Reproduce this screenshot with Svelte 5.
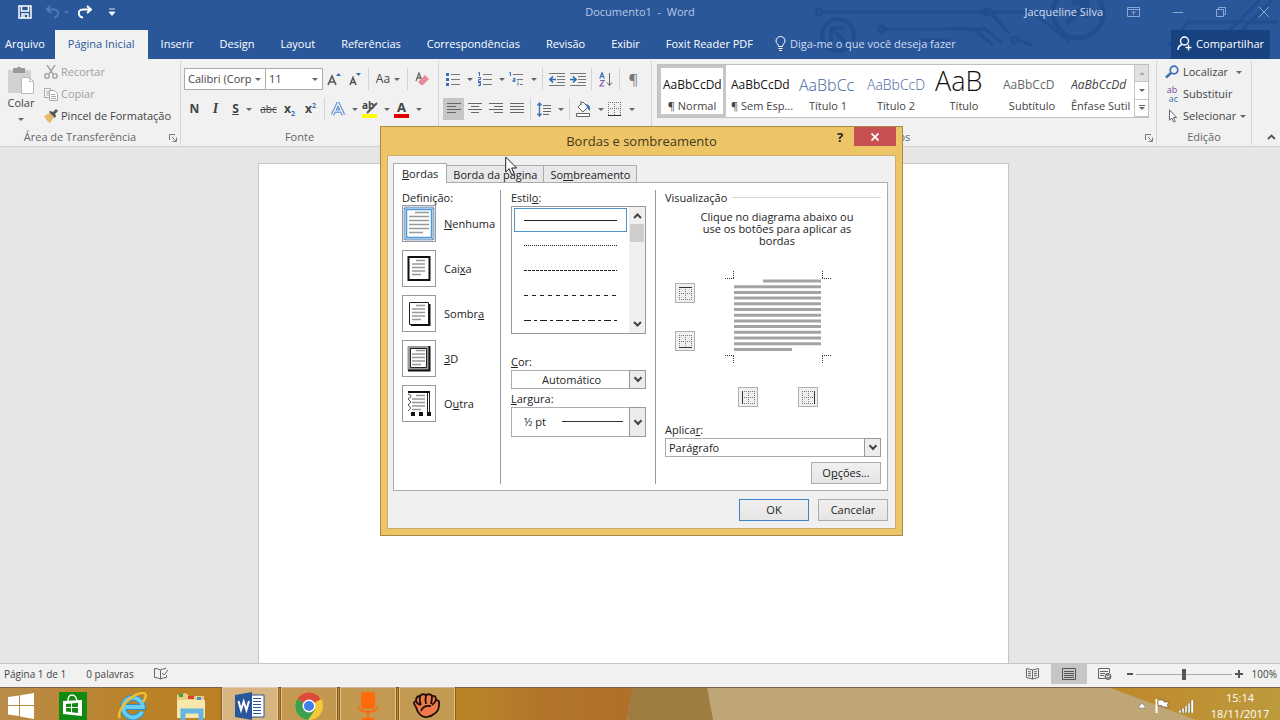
<script lang="ts">
  // Word window with the "Bordas e sombreamento" dialog open on top
  const TABS = [
    'Página Inicial',
    'Inserir',
    'Design',
    'Layout',
    'Referências',
    'Correspondências',
    'Revisão',
    'Exibir',
    'Foxit Reader PDF',
  ]
  const STYLES = [
    { name: '¶ Normal', sample: 'AaBbCcDd', kind: 'body' },
    { name: '¶ Sem Esp...', sample: 'AaBbCcDd', kind: 'body' },
    { name: 'Título 1', sample: 'AaBbCc', kind: 'h1' },
    { name: 'Título 2', sample: 'AaBbCcD', kind: 'h2' },
    { name: 'Título', sample: 'AaB', kind: 'title' },
    { name: 'Subtítulo', sample: 'AaBbCcD', kind: 'sub' },
    { name: 'Ênfase Sutil', sample: 'AaBbCcDd', kind: 'em' },
  ]
  const SETTINGS = [
    { id: 'none', pre: '', key: 'N', post: 'enhuma' },
    { id: 'box', pre: 'Cai', key: 'x', post: 'a' },
    { id: 'shadow', pre: 'Sombr', key: 'a', post: '' },
    { id: '3d', pre: '', key: '3', post: 'D' },
    { id: 'custom', pre: 'O', key: 'u', post: 'tra' },
  ]
  const LINES = [
    { name: 'Sólida', dash: 'none' },
    { name: 'Pontilhada', dash: '1 1' },
    { name: 'Tracejada curta', dash: '3 1' },
    { name: 'Tracejada', dash: '4 4' },
    { name: 'Traço e ponto', dash: '7 3 3 3' },
  ]

  let setting = $state('none')
  let line = $state(0)
  let style = $state(0)
</script>

{#snippet sep()}<span class="sep"></span>{/snippet}

{#snippet launcher()}
  <button class="launcher" aria-label="Mais opções">
    <svg width="8" height="8" viewBox="0 0 8 8" fill="none" stroke="#777"><path d="M.5 6V.5H6M3 3l4 4M7.5 3.500V7.500H3.500" /></svg>
  </button>
{/snippet}

{#snippet edge(side: string)}
  <svg width="15" height="15" viewBox="0 0 15 15" fill="none" stroke="#777" stroke-dasharray="1 1">
    <path d="M1 1.500h13M1 7.500h13M1 13.500h13M1.500 1v13M7.500 1v13M13.500 1v13" />
    <g stroke="#333" stroke-dasharray="none">
      {#if side === 'top'}<path d="M1 1.500h13" />{/if}
      {#if side === 'bottom'}<path d="M1 13.500h13" />{/if}
      {#if side === 'left'}<path d="M1.500 1v13" />{/if}
      {#if side === 'right'}<path d="M13.500 1v13" />{/if}
    </g>
  </svg>
{/snippet}

<div class="screen">
  <header>
    <svg class="circuit" width="470" height="59" viewBox="0 0 470 59" fill="none" stroke="#20498a" stroke-width="3" aria-hidden="true">
      <circle cx="9" cy="12" r="3" /><path d="M12 12h168l20 22" />
      <circle cx="72" cy="29" r="3" /><path d="M75 29h88l20 16" />
      <circle cx="28" cy="35" r="16" stroke-width="4" /><path d="M36 43L23 30M21 41V28h13" stroke-width="4" />
      <path d="M110 40h30M178 12h45l36 29" /><circle cx="177" cy="12" r="3" />
      <path d="M140 29h35l17 14" /><circle cx="205" cy="40" r="3" /><path d="M208 40l14 5" />
      <circle cx="268" cy="13" r="25" stroke-width="5" /><path d="M256 24l20-20M262 3h15v15" stroke-width="5" />
      <path d="M358 46l20-24h90M420 30l30-30M432 30l30-30" />
    </svg>
    <div class="titlebar">
      <div class="quick">
        <button aria-label="Salvar"><svg width="14" height="14" viewBox="0 0 14 14" fill="none" stroke="#fff" stroke-width="1.500"><path d="M1 1h12v12H1zM3.500 1v5h7V1M4 13V9h6v4" /><path d="M6 10v3" /></svg></button>
        <button aria-label="Desfazer"><svg width="24" height="14" viewBox="0 0 24 14" fill="none" stroke="#5078b4" stroke-width="2"><path d="M5 1L2 4.500 6 8M2 4.500h7q5 0 4 5-1 3-4 3" /><path d="M19 6h5l-2.500 3z" fill="#5078b4" stroke="none" /></svg></button>
        <button aria-label="Refazer"><svg width="14" height="14" viewBox="0 0 14 14" fill="none" stroke="#fff" stroke-width="2"><path d="M9 1l4 3.500L9 8M13 4.500H5q-5 0-4 5 1 3 4 3" /></svg></button>
        <button aria-label="Personalizar"><svg width="6" height="8" viewBox="0 0 6 8"><path d="M0 1h6M0 4h6L3 7.500z" stroke="#fff" fill="#fff" stroke-width=".8" /></svg></button>
      </div>
      <span class="doc-title">Documento1&nbsp; -&nbsp; Word</span>
      <div class="win">
        <span class="user">Jacqueline Silva</span>
        <button aria-label="Opções da faixa"><svg width="13" height="11" viewBox="0 0 13 11" fill="none" stroke="#8ba6cf"><path d="M.5.5h12v9H.5zM1 2.500h11M6.500 8V4.500M4.500 6l2-2 2 2" /></svg></button>
        <button aria-label="Minimizar"><svg width="10" height="10" viewBox="0 0 10 10" stroke="#8ba6cf"><path d="M0 5.500h10" /></svg></button>
        <button aria-label="Restaurar"><svg width="10" height="10" viewBox="0 0 10 10" fill="none" stroke="#8ba6cf"><path d="M.5 2.500h7v7h-7zM2.500 2V.5h7v7H8" /></svg></button>
        <button aria-label="Fechar"><svg width="10" height="10" viewBox="0 0 10 10" stroke="#8ba6cf"><path d="M0 0l10 10M10 0L0 10" /></svg></button>
      </div>
    </div>
    <nav class="tabs">
      <button class="file">Arquivo</button>
      {#each TABS as t, i}
        <button class:active={i === 0}>{t}</button>
      {/each}
      <button class="tell">
        <svg width="11" height="15" viewBox="0 0 11 15" fill="none" stroke="#fff"><path d="M3.500 10.500C3.500 8 1 7.500 1 5a4.500 4.500 0 0 1 9 0c0 2.500-2.500 3-2.500 5.500zM3.500 12.500h4M4 14.500h3" /></svg>
        Diga-me o que você deseja fazer
      </button>
      <button class="share">
        <svg width="15" height="15" viewBox="0 0 15 15" fill="none" stroke="#fff" stroke-width="1.400"><circle cx="7.500" cy="5" r="4" /><path d="M1 14q0-4 4-5.500M11.500 8.500v6M8.500 11.500h6" /></svg>
        Compartilhar
      </button>
    </nav>
  </header>

  <section class="ribbon">
    <div class="group">
      <div class="clip">
        <button class="paste">
          <svg width="28" height="29" viewBox="0 0 28 29"><path d="M1 4h23v23H1z" fill="#d2d2d2" /><path d="M6 2h4q2-3 4 0h4v5H6z" fill="#999" /><path d="M14.500 11.500h8l4 4v12h-12z" fill="#fff" stroke="#bbb" /><path d="M22.500 11.500v4h4" fill="none" stroke="#bbb" /></svg>
          <span>Colar</span>
          <i class="tri"></i>
        </button>
        <div class="stack">
          <button class="off"><svg width="14" height="14" viewBox="0 0 14 14" fill="none" stroke="#a5a5a5" stroke-width="1.500"><path d="M3 0l6 9M11 0L5 9" /><circle cx="3" cy="11" r="2.200" /><circle cx="11" cy="11" r="2.200" /></svg>Recortar</button>
          <button class="off"><svg width="14" height="14" viewBox="0 0 14 14" fill="#fff" stroke="#a9a9a9"><path d="M.5 1.500h6v9h-6zM2 4h3M2 6h3M2 8h3" /><path d="M5.500 3.500h5l3 3v7h-8zM7 7.500h4M7 9.500h5M7 11.500h5" /></svg>Copiar</button>
          <button><svg width="14" height="14" viewBox="0 0 14 14"><path d="M0 7l6-3 4 4-4 6-2-1z" fill="#e8b968" /><path d="M5 3l6 6 1-2-1-2 3-3-2-2-3 3-3-1z" fill="#555" /></svg>Pincel de Formatação</button>
        </div>
      </div>
      <div class="caption">Área de Transferência{@render launcher()}</div>
    </div>

    <div class="group">
      <div class="tools">
        <div class="row">
          <span class="combo font"><select aria-label="Fonte"><option>Calibri (Corp</option></select><i class="tri"></i></span>
          <span class="combo size"><select aria-label="Tamanho da fonte"><option>11</option></select><i class="tri"></i></span>
          <button class="ib" aria-label="Aumentar fonte"><svg width="14" height="14" viewBox="0 0 14 14" fill="none" stroke="#555" stroke-width="1.600"><path d="M1 13L5 4l4 9M2.500 10h5" /><path d="M9 4l2.500-3L14 4z" fill="#3b6fb5" stroke="none" /></svg></button>
          <button class="ib" aria-label="Reduzir fonte"><svg width="14" height="14" viewBox="0 0 14 14" fill="none" stroke="#555" stroke-width="1.500"><path d="M2 13l3-7.500L8 13M3 10.500h4" /><path d="M8 1h5l-2.500 3z" fill="#3b6fb5" stroke="none" /></svg></button>
          {@render sep()}
          <button class="ib drop case">Aa<i class="tri"></i></button>
          {@render sep()}
          <button class="ib" aria-label="Limpar formatação"><svg width="14" height="14" viewBox="0 0 14 14"><path d="M1 9l3-8 3 8M2 6h4" fill="none" stroke="#666" stroke-width="1.300" /><path d="M3 10l7-7 4 4-6 6H6z" fill="#e8899b" /></svg></button>
        </div>
        <div class="row">
          <button class="ib"><b>N</b></button>
          <button class="ib"><em>I</em></button>
          <button class="ib drop"><b><u>S</u></b><i class="tri"></i></button>
          <button class="ib small"><s>abc</s></button>
          <button class="ib"><b>x<sub>2</sub></b></button>
          <button class="ib"><b>x<sup>2</sup></b></button>
          {@render sep()}
          <button class="ib drop" aria-label="Efeitos de texto"><svg width="14" height="14" viewBox="0 0 14 14" fill="none"><path d="M1.500 13L7 1.500 12.500 13M4 9h6" stroke="#5b8fd0" stroke-width="3.500" /><path d="M1.500 13L7 1.500 12.500 13M4 9h6" stroke="#fff" stroke-width="1.200" /></svg><i class="tri"></i></button>
          <button class="ib drop" aria-label="Cor do realce"><span class="ink hl">ab<svg width="16" height="12" viewBox="0 0 16 12"><path d="M15 1L8 8 5 11" stroke="#555" stroke-width="2" /></svg></span><i class="tri"></i></button>
          <button class="ib drop"><span class="ink fc">A</span><i class="tri"></i></button>
        </div>
      </div>
      <div class="caption">Fonte</div>
    </div>

    <div class="group">
      <div class="tools para">
        <div class="row">
          <button class="ib drop" aria-label="Marcadores"><svg width="14" height="14" viewBox="0 0 14 14" stroke="#777"><path d="M5 2.500h9M5 7.500h9M5 12.500h9" /><path d="M0 2.500h3M0 7.500h3M0 12.500h3" stroke="#3b6fb5" stroke-width="3" /></svg><i class="tri"></i></button>
          <button class="ib drop" aria-label="Numeração"><svg width="14" height="14" viewBox="0 0 14 14" fill="none" stroke="#777"><path d="M5 2.500h9M5 7.500h9M5 12.500h9" /><path d="M0 1l1.500-.5V4M0 5.500h2.500v2H.5v2h2.500M0 10.500h2.500v3H0M1 12h1" stroke="#3b6fb5" /></svg><i class="tri"></i></button>
          <button class="ib drop" aria-label="Lista de vários níveis"><svg width="15" height="14" viewBox="0 0 15 14" fill="none" stroke="#777"><path d="M4 2.500h10M8 7.500h6M11 12.500h3" /><path d="M0 1l1.500-.5V4M4 6.500h2v3H4v-1.500h2M9 10.500v3M9 8.500v1" stroke="#3b6fb5" /></svg><i class="tri"></i></button>
          {@render sep()}
          <button class="ib" aria-label="Diminuir recuo"><svg width="16" height="13" viewBox="0 0 16 13" fill="none" stroke="#777"><path d="M0 .5h16M8 3.500h8M8 6.500h8M8 9.500h8M0 12.500h16" /><path d="M7 6.500H1M4 3.500L1 6.500l3 3" stroke="#2f6cb8" stroke-width="1.700" /></svg></button>
          <button class="ib" aria-label="Aumentar recuo"><svg width="16" height="13" viewBox="0 0 16 13" fill="none" stroke="#777"><path d="M0 .5h16M8 3.500h8M8 6.500h8M8 9.500h8M0 12.500h16" /><path d="M0 6.500h6M3 3.500l3 3-3 3" stroke="#2f6cb8" stroke-width="1.700" /></svg></button>
          {@render sep()}
          <button class="ib" aria-label="Classificar"><svg width="14" height="15" viewBox="0 0 14 15" fill="none"><path d="M.7 6.500L3 .8l2.300 5.700M1.500 4.500h3" stroke="#3b6fb5" stroke-width="1.200" /><path d="M1 8.500h4L1 14h4.500" stroke="#8b5fae" stroke-width="1.200" /><path d="M10.500 1v12M8 10.500l2.500 3 2.500-3" stroke="#666" /></svg></button>
          {@render sep()}
          <button class="ib pil">¶</button>
        </div>
        <div class="row">
          <button class="ib on" aria-label="Alinhar à esquerda"><svg width="14" height="12" viewBox="0 0 14 12" stroke="#666"><path d="M0 .5h14M0 3.500h9M0 6.500h14M0 9.500h9" /></svg></button>
          <button class="ib" aria-label="Centralizar"><svg width="14" height="12" viewBox="0 0 14 12" stroke="#666"><path d="M0 .5h14M3 3.500h8M0 6.500h14M3 9.500h8" /></svg></button>
          <button class="ib" aria-label="Alinhar à direita"><svg width="14" height="12" viewBox="0 0 14 12" stroke="#666"><path d="M0 .5h14M5 3.500h9M0 6.500h14M5 9.500h9" /></svg></button>
          <button class="ib" aria-label="Justificar"><svg width="14" height="12" viewBox="0 0 14 12" stroke="#666"><path d="M0 .5h14M0 3.500h14M0 6.500h14M0 9.500h14" /></svg></button>
          {@render sep()}
          <button class="ib drop" aria-label="Espaçamento"><svg width="14" height="15" viewBox="0 0 14 15" fill="none" stroke="#666"><path d="M6 3.500h8M6 6.500h8M6 9.500h8M6 12.500h6" /><path d="M2.500 1v13M.5 3.500l2-2.500 2 2.500M.5 11.500l2 2.500 2-2.500" stroke="#3b6fb5" stroke-width="1.300" /></svg><i class="tri"></i></button>
          {@render sep()}
          <button class="ib drop" aria-label="Sombreamento"><svg width="16" height="16" viewBox="0 0 16 16" fill="#fff" stroke="#666"><path d="M6 0v4M3 6l5-5 5 5-5 5z" /><path d="M11 3q5 1 4 7-3-2-4-7z" fill="#3b6fb5" stroke="none" /><path d="M1.500 12.500h13v3h-13z" /></svg><i class="tri"></i></button>
          <button class="ib drop" aria-label="Bordas"><svg width="14" height="14" viewBox="0 0 14 14" fill="none" stroke="#777" stroke-dasharray="1 1"><path d="M0 .5h13M0 6.500h13M.5 0v13M6.500 0v13M12.500 0v13" /><path d="M0 13.500h13" stroke="#333" stroke-dasharray="none" /></svg><i class="tri"></i></button>
        </div>
      </div>
      <div class="caption">Parágrafo</div>
    </div>

    <div class="group">
      <div class="gallery">
        {#each STYLES as s, i}
          <button class="style" class:picked={style === i} onclick={() => (style = i)}>
            <span class="sample {s.kind}">{s.sample}</span>
            <span class="name">{s.name}</span>
          </button>
        {/each}
        <div class="gal-nav">
          <button aria-label="Linha acima" disabled><i class="tri up"></i></button>
          <button aria-label="Linha abaixo"><i class="tri"></i></button>
          <button class="more" aria-label="Mais estilos"><i class="tri"></i></button>
        </div>
      </div>
      <div class="caption">Estilos{@render launcher()}</div>
    </div>

    <div class="group">
      <div class="stack edit">
        <button><svg width="14" height="14" viewBox="0 0 14 14" fill="none" stroke="#3b6fb5"><circle cx="9" cy="5" r="3.800" stroke-width="1.700" /><path d="M6 8l-5 4.500" stroke-width="2.500" /></svg>Localizar<i class="tri far"></i></button>
        <button><span class="abac"><span>ab</span><span>ac</span></span>Substituir</button>
        <button><svg width="14" height="14" viewBox="0 0 14 14" fill="#fff" stroke="#666"><path d="M4.500.8v10.500l2.300-2.300 1.700 4 1.700-.7-1.700-3.800h3.200z" /></svg>Selecionar<i class="tri"></i></button>
      </div>
      <div class="caption plain">Edição</div>
    </div>
    <button class="collapse" aria-label="Recolher"><svg width="9" height="6" viewBox="0 0 9 6" fill="none" stroke="#555" stroke-width="1.800"><path d="M1 5l3.500-3.500L8 5" /></svg></button>
  </section>

  <main><div class="page"></div></main>

  <footer class="status">
    <span>Página 1 de 1</span>
    <span>0 palavras</span>
    <svg width="14" height="12" viewBox="0 0 14 12" fill="none" stroke="#666"><path d="M6.500 2Q4 .5.500.500v9q3.500 0 6 1.500zM6.500 2Q8 .8 12 .5M6.500 11q2-1.300 6-1.500V7M8 5l2 2 4-5" /></svg>
    <div class="views">
      <button aria-label="Modo de leitura"><svg width="13" height="12" viewBox="0 0 13 12" fill="none" stroke="#666"><path d="M6.500 2L.5.500v9l6 1.500 6-1.500v-9zM6.500 2v9M2 3.500l3 .5M2 5.500l3 .5M2 7.500l3 .5M11 3.500L8 4M11 5.500L8 6M11 7.500L8 8" /></svg></button>
      <button class="on" aria-label="Layout de impressão"><svg width="14" height="12" viewBox="0 0 14 12" fill="none" stroke="#555"><path d="M.5.5h13v11H.5zM2 3.500h10M2 5.500h10M2 7.500h10M2 9.500h10" /></svg></button>
      <button aria-label="Layout da web"><svg width="14" height="12" viewBox="0 0 14 12" fill="none" stroke="#666"><path d="M7 10.500H.5V.5h11V5M2 3.500h8M2 5.500h5M2 7.500h4" /><circle cx="10" cy="8.500" r="3" fill="#888" /><path d="M8 8l2 1 2-2" stroke="#eee" /></svg></button>
    </div>
    <div class="zoom">
      <button aria-label="Menos zoom"><svg width="6" height="8" viewBox="0 0 6 8" stroke="#555" stroke-width="2"><path d="M0 4h6" /></svg></button>
      <input type="range" min="0" max="100" value="50" aria-label="Zoom" />
      <button aria-label="Mais zoom"><svg width="8" height="8" viewBox="0 0 8 8" stroke="#555" stroke-width="2"><path d="M0 4h8M4 0v8" /></svg></button>
      <span>100%</span>
    </div>
  </footer>

  <div class="taskbar">
    <svg class="wall" viewBox="0 0 1280 33" preserveAspectRatio="none" aria-hidden="true">
      <defs>
        <linearGradient id="amber"><stop offset="0" stop-color="#b98c48" /><stop offset=".25" stop-color="#ba8124" /><stop offset=".75" stop-color="#b88428" /><stop offset=".85" stop-color="#b3752a" /><stop offset="1" stop-color="#b06f2a" /></linearGradient>
        <linearGradient id="gold"><stop offset="0" stop-color="#c0882a" /><stop offset="1" stop-color="#bc9a3c" /></linearGradient>
      </defs>
      <path d="M0 0h633l-6 33H0z" fill="url(#amber)" />
      <path d="M632 0h76l6 33h-87z" fill="#9f7c3f" />
      <path d="M707 0h410l95 33H713z" fill="#bea676" />
      <path d="M1108 0h172v33h-84z" fill="url(#gold)" />
      <path d="M0 .5h1280" stroke="#77664a" />
    </svg>
    <div class="apps">
      <button class="start" aria-label="Iniciar"><svg width="26" height="26" viewBox="0 0 26 26" fill="#fff"><path d="M0 4l11-1.500V12H0zM12 2.300L26 0v12H12zM0 13h11v10L0 21.500zM12 13h14v13l-14-2.500z" /></svg></button>
      <button aria-label="Loja"><svg width="28" height="28" viewBox="0 0 28 28"><path d="M0 0h28v28H0z" fill="#108a10" /><path d="M4 9l19-1v16L4 22z" fill="#fff" /><path d="M9 9q0-6 4-6t5 6" fill="none" stroke="#fff" stroke-width="1.500" /><path d="M7 12l5-.5V15H7zM13 11.400l6-.6V15h-6zM7 16h5v4l-5-.5zM13 16h6v5l-6-.7z" fill="#108a10" /></svg></button>
      <button aria-label="Internet Explorer"><svg width="30" height="28" viewBox="0 0 30 28" fill="none"><path d="M25 19.500A9.800 9.800 0 1 1 25.800 15H8" stroke="#2b8fc4" stroke-width="6" /><path d="M25 19.500A9.800 9.800 0 1 1 25.800 15H8" stroke="#69cdf0" stroke-width="4" /><path d="M3 26C-2 20 15 0 27 1q4 2-1 9" stroke="#efbd32" stroke-width="2.500" /></svg></button>
      <button aria-label="Explorador de Arquivos"><svg width="30" height="28" viewBox="0 0 30 28"><path d="M1 3l9-2 3 3h15v22H1z" fill="#e9cf82" /><path d="M3 2h4v3H3z" fill="#3c9a4c" /><path d="M12 4h6v3h-6z" fill="#d8402f" /><path d="M21 5h4v3h-4z" fill="#4a90d0" /><path d="M1 8h28v18H1z" fill="#f6e7ad" /><path d="M7 28V19h18v9" fill="none" stroke="#68b4e0" stroke-width="5" /></svg></button>
      <button class="tile active" aria-label="Word"><svg width="30" height="28" viewBox="0 0 30 28"><path d="M12 3h17v22H12z" fill="#fff" stroke="#2a579a" /><path d="M18 6.500h8M18 9.500h8M18 12.500h8M18 15.500h8M18 18.500h8M18 21.500h8" stroke="#2a579a" /><path d="M0 3l17-3v28L0 25z" fill="#2a579a" /><path d="M3.500 9l2.500 9 2.700-8.500L11.400 18 14 9" fill="none" stroke="#fff" stroke-width="2" /></svg></button>
      <button class="tile" aria-label="Chrome"><svg width="28" height="28" viewBox="0 0 28 28"><circle cx="14" cy="14" r="14" fill="#f3c936" /><path d="M14 14L2 7a14 14 0 0 1 24 0z" fill="#d94b3d" /><path d="M14 14L2 7a14 14 0 0 0 11 21l7-10z" fill="#3d9f50" /><circle cx="14" cy="14" r="6.500" fill="#fff" /><circle cx="14" cy="14" r="5" fill="#3f7de8" /></svg></button>
      <button class="tile" aria-label="Gravador"><svg width="22" height="28" viewBox="0 0 22 28" fill="none" stroke="#ff6a0a" stroke-width="2"><rect x="5" y="1" width="12" height="15" rx="2" fill="#ff6a0a" /><path d="M1 15q2 5 10 5t10-5M11 20v6M5 27h12" /></svg></button>
      <button class="tile" aria-label="Captura"><svg width="28" height="26" viewBox="0 0 28 26" fill="#f0794a" stroke="#1c120c" stroke-width="1.800"><path d="M3 14Q-1 9 3 8q0-5 4-5 2-3 6-1 4-2 6 1 4-1 4 4 4 0 3 5 0 6-5 9-6 5-12 2-4-2-6-9z" /><path d="M3 8q1 3 5 4M7 3q-1 5 1 9M13 2q-1 5 0 9M19 3q0 4-1 8M23 7q-1 3-4 5M8 18q2-6 10-5" fill="none" /></svg></button>
    </div>
    <div class="tray">
      <button aria-label="Mostrar ícones ocultos"><svg width="8" height="6" viewBox="0 0 8 6"><path d="M0 5l4-5 4 5z" fill="#fff" stroke="#666" stroke-width=".5" /></svg></button>
      <button aria-label="Central de ações"><svg width="15" height="14" viewBox="0 0 15 14"><path d="M1.500 0v14" stroke="#fff" stroke-width="2" /><path d="M3 1h5l1 2h5l-2 3 2 2H8L7 6.500H3z" fill="#fff" stroke="#554" stroke-width=".6" /></svg></button>
      <button aria-label="Rede"><svg width="15" height="13" viewBox="0 0 15 13" fill="#fff" stroke="#554" stroke-width=".4"><path d="M0 10h2v3H0zM3 8h2v5H3zM6 5.500h2V13H6zM9 3h2v10H9zM12 0h2.500v13H12z" /></svg></button>
      <div class="clock"><span>15:14</span><span>18/11/2017</span></div>
    </div>
  </div>

  <div class="dialog" role="dialog" aria-labelledby="dlg-title">
    <div class="dlg-bar">
      <h1 id="dlg-title">Bordas e sombreamento</h1>
      <div class="dlg-ctl">
        <button class="help" aria-label="Ajuda">?</button>
        <button class="close" aria-label="Fechar"><svg width="8" height="8" viewBox="0 0 8 8" stroke="#fff" stroke-width="1.800"><path d="M.5.5l7 7M7.500.5l-7 7" /></svg></button>
      </div>
    </div>
    <div class="dlg-body">
      <div class="dlg-tabs">
        <button class="active"><u>B</u>ordas</button>
        <button>Borda da pá<u>g</u>ina</button>
        <button>So<u>m</u>breamento</button>
      </div>
      <div class="panel">
        <div class="col">
          <span class="lbl">Definição:</span>
          <div class="settings">
            {#each SETTINGS as s}
              <button class:chosen={setting === s.id} onclick={() => (setting = s.id)}>
                <svg width="34" height="37" viewBox="0 0 34 37" fill="none">
                  {#if setting === s.id}
                    <rect x="2.500" y="2.500" width="29" height="32" stroke="#2a5f9e" stroke-width="2" stroke-dasharray="1 1" />
                    <rect x="4.500" y="4.500" width="25" height="28" stroke="#4c9be0" stroke-width="1.500" />
                  {/if}
                  {#if s.id === 'box'}<rect x="6.500" y="7" width="21" height="23" stroke="#111" stroke-width="2" />{/if}
                  {#if s.id === 'shadow'}<path d="M7.500 7.500h19v22h-19z" stroke="#222" /><path d="M9 30h18.500V9" stroke="#111" stroke-width="2" />{/if}
                  {#if s.id === '3d'}<path d="M7 7.500h19v21H7z" stroke="#999" stroke-width="3" /><path d="M27.500 6v24.500H6" stroke="#111" stroke-width="2" /><path d="M8.500 8.500h16v19h-16z" stroke="#222" />{/if}
                  {#if s.id === 'custom'}
                    <path d="M6 7h22" stroke="#111" stroke-width="2" /><path d="M25.500 8v19M27.500 8v19" stroke="#222" />
                    <path d="M6 9q4 1 3 3l-3 2 3 3-3 3 3 3-3 3" stroke="#555" />
                    <path d="M9 29h20" stroke="#111" stroke-width="4" stroke-dasharray="4 4" />
                  {/if}
                  {#if s.id === 'none'}
                    <path d="M13 7.500h14M7 11.500h20M7 15.500h20M7 19.500h20M7 23.500h20M7 27.500h14" stroke="#999" stroke-width="1.500" />
                  {:else}
                    <path d="M14 10.500h9M10 14h13M10 17.500h13M10 21h13M10 24.500h9" stroke="#999" stroke-width="1.500" />
                  {/if}
                </svg>
                <span>{s.pre}<u>{s.key}</u>{s.post}</span>
              </button>
            {/each}
          </div>
        </div>

        <div class="col mid">
          <span class="lbl">Estil<u>o</u>:</span>
          <div class="list">
            <div class="lines">
              {#each LINES as l, i}
                <button class:chosen={line === i} aria-label={l.name} onclick={() => (line = i)}>
                  <svg width="93" height="1" viewBox="0 0 93 1"><path d="M0 .5h93" stroke="#222" stroke-dasharray={l.dash} /></svg>
                </button>
              {/each}
            </div>
            <div class="scroll">
              <svg width="9" height="6" viewBox="0 0 9 6" fill="none" stroke="#444" stroke-width="2"><path d="M1 5l3.500-3.500L8 5" /></svg>
              <span class="thumb"></span>
              <svg width="9" height="6" viewBox="0 0 9 6" fill="none" stroke="#444" stroke-width="2"><path d="M1 1l3.500 3.500L8 1" /></svg>
            </div>
          </div>
          <label class="lbl" for="cor"><u>C</u>or:</label>
          <span class="pick">
            <select id="cor" class="center"><option>Automático</option></select>
            <i class="chev"></i>
          </span>
          <label class="lbl" for="largura"><u>L</u>argura:</label>
          <span class="pick tall">
            <select id="largura"><option>½ pt</option></select>
            <span class="rule"></span>
            <i class="chev"></i>
          </span>
        </div>

        <div class="col view">
          <div class="legend">Visualização</div>
          <p>Clique no diagrama abaixo ou use os botões para aplicar as bordas</p>
          <div class="preview">
            <div class="side">
              <button class="edge" aria-label="Borda superior">{@render edge('top')}</button>
              <button class="edge" aria-label="Borda inferior">{@render edge('bottom')}</button>
            </div>
            <svg width="106" height="92" viewBox="0 0 106 92" fill="none">
              <path d="M0 7.500h9M8.500 0v7M106 7.500h-9M97.500 0v7M0 84.500h9M8.500 85v7M106 84.500h-9M97.500 85v7" stroke="#333" stroke-dasharray="1 1" />
              <path d="M38 10h58" stroke="#a3a3a3" stroke-width="3" />
              {#each Array(11) as _, i}
                <path d="M9 {15.7 + i * 5.7}h87" stroke="#a3a3a3" stroke-width="3" />
              {/each}
              <path d="M9 78.500h58" stroke="#a3a3a3" stroke-width="3" />
            </svg>
            <div class="under">
              <button class="edge" aria-label="Borda esquerda">{@render edge('left')}</button>
              <button class="edge" aria-label="Borda direita">{@render edge('right')}</button>
            </div>
          </div>
          <label class="lbl" for="aplicar">Aplica<u>r</u>:</label>
          <span class="pick">
            <select id="aplicar"><option>Parágrafo</option></select>
            <i class="chev"></i>
          </span>
          <button class="btn opts">O<u>p</u>ções...</button>
        </div>
      </div>
      <div class="actions">
        <button class="btn default">OK</button>
        <button class="btn">Cancelar</button>
      </div>
    </div>
    <svg class="pointer" width="13" height="20" viewBox="0 0 13 20" fill="#fff" stroke="#222"><path d="M.7 1v15l3.500-3.300 2.500 6 2.500-1-2.600-5.700h5z" /></svg>
  </div>
</div>

<style>
  :global(body) {
    margin: 0;
  }
  .screen {
    position: relative;
    display: flex;
    flex-direction: column;
    height: 100vh;
    overflow: hidden;
    background: #e6e6e6;
    color: #444;
    font: 11px/16px 'Open Sans', 'Noto Sans', sans-serif;
  }
  button,
  select {
    margin: 0;
    padding: 0;
    border: 0;
    border-radius: 0;
    background: none;
    color: inherit;
    font: inherit;
    appearance: none;
  }
  svg {
    display: block;
    flex: none;
  }
  .tri {
    flex: none;
    width: 0;
    border: 3px solid transparent;
    border-top-color: #666;
    border-bottom: 0;
  }
  .tri.up {
    border-top: 0;
    border-bottom: 3px solid #aaa;
  }

  /* ---------- title bar and tabs ---------- */
  header {
    position: relative;
    height: 59px;
    background: #2a579a;
    color: #fff;
  }
  .circuit {
    position: absolute;
    top: 0;
    right: 0;
    opacity: 0.7;
  }
  .titlebar {
    position: relative;
    display: grid;
    grid-template-columns: 1fr auto 1fr;
    align-items: center;
    height: 24px;
    margin-bottom: 6px;
  }
  .quick {
    display: flex;
    align-items: center;
    gap: 17px;
    padding-left: 18px;
  }
  .quick button:nth-child(2) {
    margin-left: -4px;
  }
  .quick button:nth-child(3) {
    margin-left: -8px;
  }
  .doc-title {
    color: #b7c8e2;
  }
  .win {
    display: flex;
    align-items: center;
    justify-content: flex-end;
    gap: 33px;
    padding-right: 11px;
  }
  .user {
    margin-right: -9px;
    color: #d3deee;
  }
  .tabs {
    position: relative;
    display: flex;
    height: 29px;
  }
  .tabs button {
    padding: 0 13px 2px;
    white-space: nowrap;
  }
  .tabs .file {
    padding: 0 10px 2px 5px;
  }
  .tabs .active {
    background: #f1f1f1;
    color: #2a579a;
  }
  .tabs .tell {
    display: flex;
    align-items: center;
    gap: 4px;
    padding-left: 9px;
    color: #cfdcf0;
  }
  .tabs .share {
    display: flex;
    align-items: center;
    gap: 4px;
    margin: 0 10px 0 auto;
    padding: 0 6px 2px;
    background: #17427f;
  }

  /* ---------- ribbon ---------- */
  .ribbon {
    display: grid;
    grid-template-columns: 181px 258px 213px 1fr 95px 28px;
    height: 87px;
    border-bottom: 1px solid #d0d0d0;
    background: #f1f1f1;
  }
  .group {
    display: flex;
    flex-direction: column;
    justify-content: space-between;
    margin: 2px 0 1px;
    border-right: 1px solid #d4d4d4;
  }
  .caption {
    position: relative;
    padding-right: 20px;
    color: #666;
    text-align: center;
  }
  .caption.plain {
    padding-right: 0;
  }
  .launcher {
    position: absolute;
    right: 3px;
    bottom: 3px;
  }
  .clip {
    display: flex;
    gap: 7px;
    padding-left: 5px;
  }
  .paste {
    display: flex;
    flex-direction: column;
    align-items: center;
    width: 32px;
    padding-top: 5px;
  }
  .paste .tri {
    margin-top: 7px;
  }
  .stack {
    display: flex;
    flex-direction: column;
  }
  .stack button {
    display: flex;
    align-items: center;
    gap: 3px;
    height: 22px;
    white-space: nowrap;
  }
  .stack .off {
    color: #a0a0a0;
  }
  .stack.edit {
    padding-left: 8px;
  }
  .stack.edit button {
    gap: 4px;
  }
  .stack .far {
    margin-left: 4px;
  }
  .abac {
    display: flex;
    flex-direction: column;
    width: 14px;
    color: #7a4b9a;
    font-size: 9px;
    line-height: 9px;
  }
  .abac span + span {
    padding-left: 3px;
    color: #3b6fb5;
  }
  .tools {
    display: flex;
    flex-direction: column;
    gap: 8px;
    padding: 7px 0 0 3px;
  }
  .tools.para {
    padding-left: 4px;
  }
  .row {
    display: flex;
    align-items: center;
    height: 22px;
  }
  .combo {
    position: relative;
    box-sizing: border-box;
    height: 22px;
    border: 1px solid #ababab;
    background: #fff;
  }
  .combo.font {
    width: 82px;
  }
  .combo.size {
    width: 58px;
    margin-left: -1px;
  }
  .combo select {
    width: 100%;
    height: 100%;
    padding: 0 3px;
  }
  .combo .tri {
    position: absolute;
    right: 4px;
    top: 9px;
  }
  .ib {
    display: flex;
    align-items: center;
    justify-content: center;
    width: 21px;
    height: 22px;
  }
  .ib.drop {
    width: 32px;
    gap: 7px;
  }
  .ib.case {
    gap: 4px;
    font-size: 12px;
  }
  .ib.on {
    background: #c6c6c6;
  }
  .ib em {
    font-family: 'Liberation Serif', serif;
    font-size: 14px;
    font-weight: bold;
  }
  .ib b {
    font-size: 12px;
  }
  .ib sub,
  .ib sup {
    color: #3b6fb5;
    font-size: 7px;
    line-height: 1px;
  }
  .ib.small {
    font-size: 10px;
  }
  .ib.pil {
    color: #777;
    font-size: 15px;
  }
  .ink {
    position: relative;
    width: 15px;
    height: 13px;
    border-bottom: 4px solid #e00000;
    font-size: 13px;
    font-weight: bold;
    line-height: 13px;
    text-align: center;
  }
  .ink.hl {
    border-color: #ff0;
    font-size: 10px;
    line-height: 8px;
    text-align: left;
  }
  .ink.hl svg {
    position: absolute;
    left: 0;
    bottom: 0;
  }
  .sep {
    width: 1px;
    height: 22px;
    margin: 0 3px;
    background: #d4d4d4;
  }
  .gallery {
    display: flex;
    height: 52px;
    margin: 3px 7px 0 5px;
    border: 1px solid #c0c0c0;
    background: #fff;
  }
  .style {
    display: flex;
    flex: 1;
    flex-direction: column;
    min-width: 0;
    padding: 0 2px;
    border: 3px solid transparent;
  }
  .style.picked {
    border-color: #c6c6c6;
  }
  .sample {
    width: 100%;
    height: 30px;
    overflow: hidden;
    color: #111;
    font-size: 12px;
    line-height: 34px;
    text-align: left;
    white-space: nowrap;
  }
  .sample.h1 {
    color: #46639b;
    font-size: 16px;
    font-weight: 300;
  }
  .sample.h2 {
    color: #46639b;
    font-size: 14px;
    font-weight: 300;
  }
  .sample.title {
    font-size: 27px;
    font-weight: 300;
    line-height: 26px;
  }
  .sample.sub {
    color: #666;
  }
  .sample.em {
    color: #444;
    font-style: italic;
  }
  .name {
    width: 100%;
    line-height: 15px;
    white-space: nowrap;
  }
  .gal-nav {
    display: flex;
    flex-direction: column;
    width: 14px;
  }
  .gal-nav button {
    display: flex;
    flex: 1;
    flex-direction: column;
    align-items: center;
    justify-content: center;
    gap: 1px;
    border: 1px solid #c6c6c6;
    border-width: 0 0 1px 1px;
  }
  .gal-nav button:disabled {
    background: #e1e1e1;
  }
  .gal-nav .more::before {
    width: 6px;
    height: 1px;
    background: #666;
    content: '';
  }
  .collapse {
    align-self: end;
    justify-self: end;
    padding: 6px 4px;
  }

  /* ---------- document and status bar ---------- */
  main {
    display: flex;
    flex: 1;
    justify-content: center;
    padding: 16px 13px 0 0;
  }
  .page {
    width: 749px;
    border: 1px solid #c6c6c6;
    border-bottom: 0;
    background: #fff;
  }
  .status {
    display: flex;
    align-items: center;
    gap: 20px;
    height: 20px;
    padding: 0 3px 3px 4px;
    border-top: 1px solid #c6c6c6;
    background: #f1f1f1;
    font-size: 10px;
  }
  .views {
    display: flex;
    height: 20px;
    margin-left: auto;
  }
  .views button {
    display: flex;
    align-items: center;
    justify-content: center;
    width: 36px;
  }
  .views .on {
    background: #c6c6c6;
  }
  .zoom {
    display: flex;
    align-items: center;
    gap: 3px;
    margin-left: -16px;
  }
  .zoom span {
    margin-left: 6px;
  }
  .zoom input {
    width: 96px;
    height: 12px;
    margin: 0;
    background: linear-gradient(#aaa, #aaa) center / 100% 1px no-repeat;
    appearance: none;
  }
  .zoom input::-webkit-slider-thumb {
    width: 4px;
    height: 11px;
    background: #555;
    appearance: none;
  }

  /* ---------- taskbar ---------- */
  .taskbar {
    position: relative;
    display: flex;
    justify-content: space-between;
    height: 33px;
    overflow: hidden;
  }
  .wall {
    position: absolute;
    inset: 0;
    width: 100%;
    height: 100%;
  }
  .apps,
  .tray {
    position: relative;
    display: flex;
    align-items: center;
    height: 38px;
  }
  .apps button {
    display: flex;
    align-items: center;
    justify-content: center;
    box-sizing: border-box;
    width: 56px;
    height: 38px;
    margin-left: 3px;
  }
  .apps .start {
    width: 42px;
    margin: 0;
  }
  .apps .tile {
    border: 1px solid rgba(255, 235, 200, 0.5);
    background: rgba(220, 205, 180, 0.3);
    box-shadow: 0 0 0 1px rgba(90, 60, 20, 0.5);
  }
  .apps .active {
    background: rgba(235, 215, 190, 0.6);
  }
  .tray {
    gap: 9px;
    color: #fff;
  }
  .clock {
    display: flex;
    flex-direction: column;
    align-items: center;
    width: 74px;
    margin: 0 3px 0 0;
  }

  /* ---------- dialog ---------- */
  .dialog {
    position: absolute;
    top: 126px;
    left: 380px;
    box-sizing: border-box;
    width: 523px;
    padding: 0 6px 6px;
    border: 1px solid #a58a4c;
    background: #edc566;
    color: #222;
  }
  .dlg-bar {
    display: flex;
    justify-content: center;
    height: 28px;
  }
  .dlg-bar h1 {
    margin: 0;
    color: #433a20;
    font-size: 13px;
    font-weight: normal;
    line-height: 28px;
  }
  .dlg-ctl {
    position: absolute;
    top: 0;
    right: 6px;
    display: flex;
  }
  .help {
    width: 28px;
    font-size: 13px;
    font-weight: bold;
  }
  .close {
    display: flex;
    align-items: center;
    justify-content: center;
    width: 42px;
    height: 19px;
    background: #c75050;
  }
  .dlg-body {
    padding: 7px 7px 7px 5px;
    border: 1px solid #c9ae6a;
    background: #f0f0f0;
  }
  .dlg-tabs {
    display: flex;
    align-items: flex-end;
  }
  .dlg-tabs button {
    height: 17px;
    margin-left: -1px;
    padding: 0 6px;
    border: 1px solid #acacac;
    border-bottom: 0;
    background: #e8e8ea;
    line-height: 15px;
    white-space: nowrap;
  }
  .dlg-tabs .active {
    z-index: 1;
    height: 20px;
    margin: 0 0 -1px;
    padding: 0 8px;
    background: #fff;
  }
  .panel {
    display: grid;
    grid-template-columns: 107px 155px 1fr;
    padding: 7px 0 6px;
    border: 1px solid #acacac;
    background: #fff;
  }
  .col {
    display: flex;
    flex-direction: column;
    padding: 0 8px;
    border-right: 1px solid #999;
  }
  .col.mid {
    padding: 0 9px 0 10px;
  }
  .col.view {
    padding: 0 6px 0 9px;
    border: 0;
  }
  .lbl {
    line-height: 15px;
  }
  .settings {
    display: flex;
    flex-direction: column;
    gap: 8px;
  }
  .settings button {
    display: flex;
    align-items: center;
    gap: 8px;
  }
  .settings svg {
    outline: 1px solid #999;
    outline-offset: -1px;
  }
  .list {
    display: flex;
    margin: 1px 0 20px;
    border: 1px solid #999;
  }
  .lines {
    flex: 1;
    padding: 1px 2px 0;
  }
  .lines button {
    display: flex;
    align-items: center;
    justify-content: center;
    box-sizing: border-box;
    width: 100%;
    height: 24px;
    margin-bottom: 1px;
    border: 1px solid transparent;
  }
  .lines .chosen {
    border-color: #4c94cc;
  }
  .scroll {
    display: flex;
    flex-direction: column;
    align-items: center;
    width: 16px;
    padding: 6px 0;
    background: #f0f0f0;
  }
  .thumb {
    width: 14px;
    height: 18px;
    margin: 5px 0 auto;
    background: #cdcdcd;
  }
  .pick {
    position: relative;
    display: flex;
    box-sizing: border-box;
    height: 19px;
    margin: 1px 0 2px;
    border: 1px solid #acacac;
  }
  .pick.tall {
    height: 30px;
  }
  .pick select {
    width: 100%;
    padding: 0 3px;
  }
  .pick.tall select {
    padding-left: 12px;
  }
  .pick .center {
    padding-left: 30px;
  }
  .rule {
    position: absolute;
    top: 13px;
    right: 22px;
    width: 61px;
    height: 1px;
    background: #333;
  }
  .chev {
    position: absolute;
    top: -1px;
    right: -1px;
    bottom: -1px;
    display: flex;
    align-items: center;
    justify-content: center;
    width: 15px;
    border: 1px solid #999;
    background: #ececec;
    pointer-events: none;
  }
  .chev::after {
    width: 4px;
    height: 4px;
    margin-top: -3px;
    border: solid #444;
    border-width: 0 2px 2px 0;
    content: '';
    transform: rotate(45deg);
  }
  .legend {
    display: flex;
    align-items: center;
    gap: 5px;
    line-height: 15px;
  }
  .legend::after {
    flex: 1;
    height: 1px;
    background: #d5d5d5;
    content: '';
  }
  .view p {
    width: 160px;
    margin: 6px auto 24px;
    padding-left: 8px;
    line-height: 12px;
    text-align: center;
  }
  .preview {
    display: grid;
    grid-template-columns: 20px 106px;
    gap: 24px 30px;
    margin: 0 0 15px 10px;
  }
  .side {
    display: flex;
    flex-direction: column;
    gap: 28px;
    padding-top: 12px;
  }
  .under {
    display: flex;
    grid-column: 2;
    justify-content: center;
    gap: 40px;
  }
  .edge {
    display: flex;
    align-items: center;
    justify-content: center;
    box-sizing: border-box;
    width: 20px;
    height: 20px;
    border: 1px solid #b0b0b0;
    background: #f0f0f0;
  }
  .btn {
    box-sizing: border-box;
    width: 70px;
    height: 22px;
    border: 1px solid #acacac;
    background: linear-gradient(#f0f0f0, #e5e5e5);
  }
  .btn.default {
    border-color: #3c85c8;
  }
  .opts {
    align-self: flex-end;
    margin-top: 3px;
  }
  .actions {
    display: flex;
    justify-content: flex-end;
    gap: 9px;
    margin-top: 8px;
  }
  .pointer {
    position: absolute;
    top: 29px;
    left: 124px;
    z-index: 2;
  }
</style>
